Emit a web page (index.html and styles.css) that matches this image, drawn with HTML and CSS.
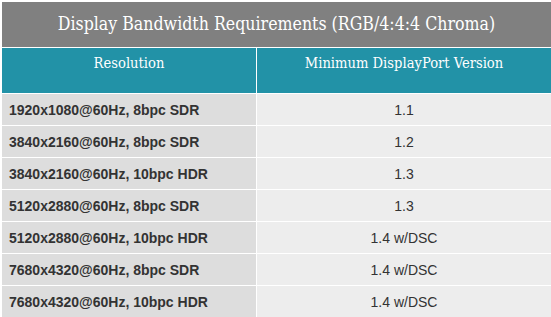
FILE: index.html
```html
<!DOCTYPE html>
<html>
<head>
<meta charset="utf-8">
<link rel="stylesheet" href="styles.css">
</head>
<body>
<div class="sheet">
  <div class="title">Display Bandwidth Requirements (RGB/4:4:4 Chroma)</div>
  <div class="head">Resolution</div>
  <div class="head">Minimum DisplayPort Version</div>
  <div class="res">1920x1080@60Hz, 8bpc SDR</div><div class="ver">1.1</div>
  <div class="res">3840x2160@60Hz, 8bpc SDR</div><div class="ver">1.2</div>
  <div class="res">3840x2160@60Hz, 10bpc HDR</div><div class="ver">1.3</div>
  <div class="res">5120x2880@60Hz, 8bpc SDR</div><div class="ver">1.3</div>
  <div class="res">5120x2880@60Hz, 10bpc HDR</div><div class="ver">1.4 w/DSC</div>
  <div class="res">7680x4320@60Hz, 8bpc SDR</div><div class="ver">1.4 w/DSC</div>
  <div class="res">7680x4320@60Hz, 10bpc HDR</div><div class="ver">1.4 w/DSC</div>
</div>
</body>
</html>
```
FILE: styles.css
```css
html, body { margin: 0; padding: 0; background: #fff; }
.sheet {
  display: grid;
  grid-template-columns: 254px 294px;
  grid-template-rows: 45px 45px repeat(7, 31px);
  gap: 1px;
  padding: 2px 0 0 2px;
}
.title {
  grid-column: 1 / 3;
  background: #808080;
  color: #fff;
  font-family: "DejaVu Serif Condensed", "DejaVu Serif", serif;
  font-size: 17.6px;
  display: flex;
  align-items: center;
  justify-content: center;
  padding-bottom: 1px;
  box-sizing: border-box;
}
.head {
  background: #2292a7;
  color: #fff;
  font-family: "DejaVu Serif Condensed", "DejaVu Serif", serif;
  font-size: 14.6px;
  text-align: center;
  padding-top: 6px;
  box-sizing: border-box;
}
.res, .ver {
  font-family: "Liberation Sans", Arial, sans-serif;
  font-size: 14px;
  color: #333;
  display: flex;
  align-items: center;
}
.res { background: #dddddd; font-weight: bold; padding-left: 7px; }
.ver { background: #ededed; justify-content: center; }
```
